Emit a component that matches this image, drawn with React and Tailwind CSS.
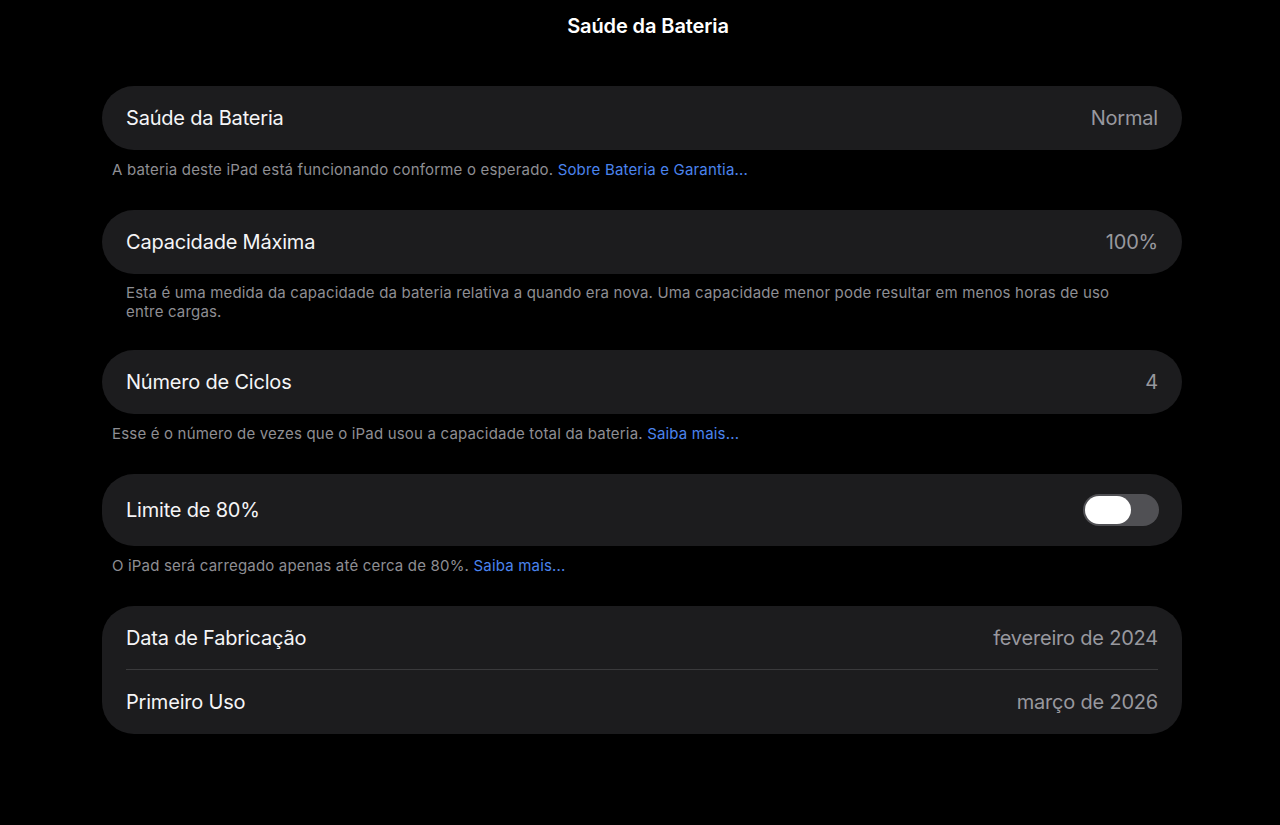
import React from 'react';

const font = { fontFamily: 'Inter, "Noto Sans", "Liberation Sans", sans-serif' };

const Row = ({ label, value, children }) => (
  <div className="flex items-center justify-between h-[64px] px-[24px]">
    <span className="text-[20px] text-[#f5f5f7] tracking-[-0.2px]">{label}</span>
    {value && <span className="text-[20px] text-[#98989e] tracking-[-0.2px]">{value}</span>}
    {children}
  </div>
);

const Card = ({ children, className = '' }) => (
  <div className={`bg-[#1c1c1e] rounded-[32px] ${className}`}>{children}</div>
);

const Link = ({ children }) => <span className="text-[#4b84ee]">{children}</span>;

const Toggle = () => (
  <div className="w-[76px] h-[32px] rounded-full bg-[#505054] p-[2px] flex items-center">
    <div className="w-[46px] h-[28px] rounded-full bg-white" />
  </div>
);

export default function App() {
  return (
    <div className="min-h-[825px] bg-black text-white" style={font}>
      <div className="flex justify-center pt-[14px] pl-[16px]">
        <h1 className="text-[20px] leading-[24px] font-semibold tracking-[-0.1px]">Saúde da Bateria</h1>
      </div>

      <div className="ml-[102px] w-[1080px] pt-[48px]">
        <Card>
          <Row label="Saúde da Bateria" value="Normal" />
        </Card>
        <p className="pt-[10px] pb-[30px] pl-[10px] text-[15px] leading-[20px] tracking-[0.18px] text-[#8e8e93]">
          A bateria deste iPad está funcionando conforme o esperado. <Link>Sobre Bateria e Garantia...</Link>
        </p>

        <Card>
          <Row label="Capacidade Máxima" value="100%" />
        </Card>
        <p className="pt-[9px] pb-[29px] pl-[24px] pr-[60px] text-[15px] leading-[19px] tracking-[0.18px] text-[#8e8e93]">
          Esta é uma medida da capacidade da bateria relativa a quando era nova. Uma capacidade menor pode resultar em menos horas de uso entre cargas.
        </p>

        <Card>
          <Row label="Número de Ciclos" value="4" />
        </Card>
        <p className="pt-[10px] pb-[30px] pl-[10px] text-[15px] leading-[20px] tracking-[0.18px] text-[#8e8e93]">
          Esse é o número de vezes que o iPad usou a capacidade total da bateria. <Link>Saiba mais...</Link>
        </p>

        <Card>
          <div className="flex items-center justify-between h-[72px] pl-[24px] pr-[23px]">
            <span className="text-[20px] text-[#f5f5f7] tracking-[-0.2px]">Limite de 80%</span>
            <Toggle />
          </div>
        </Card>
        <p className="pt-[10px] pb-[30px] pl-[10px] text-[15px] leading-[20px] tracking-[0.18px] text-[#8e8e93]">
          O iPad será carregado apenas até cerca de 80%. <Link>Saiba mais...</Link>
        </p>

        <Card>
          <div className="flex items-center justify-between h-[63px] px-[24px]">
            <span className="text-[20px] text-[#f5f5f7] tracking-[-0.2px]">Data de Fabricação</span>
            <span className="text-[20px] text-[#98989e] tracking-[-0.2px]">fevereiro de 2024</span>
          </div>
          <div className="mx-[24px] h-px bg-[#3a3a3c]" />
          <Row label="Primeiro Uso" value="março de 2026" />
        </Card>
      </div>
    </div>
  );
}
